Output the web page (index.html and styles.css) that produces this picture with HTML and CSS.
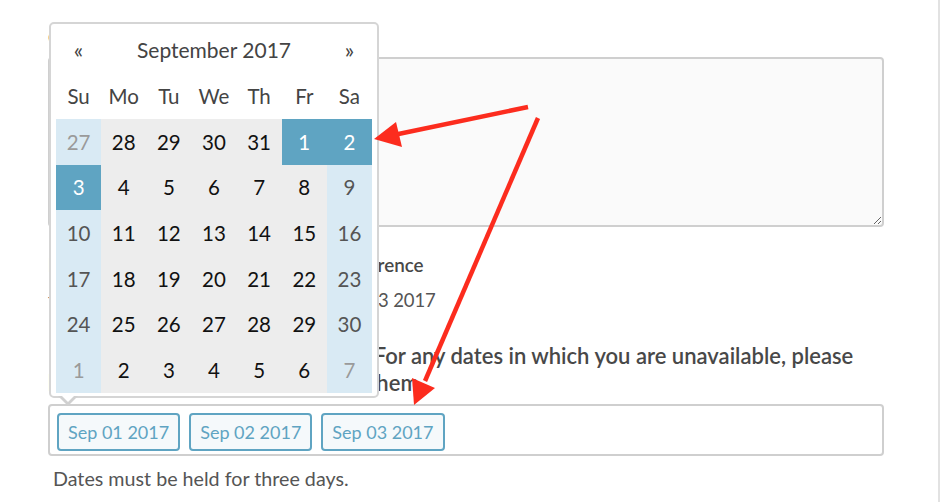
FILE: index.html
```html
<!DOCTYPE html>
<html lang="en">
<head>
<meta charset="utf-8">
<title>Date selection</title>
<link rel="stylesheet" href="styles.css">
</head>
<body>
<div class="page">
  <div class="form">
    <h2 class="title">Tell us a little bit about your group and your stay</h2>
    <label class="lbl lbl-first" for="comments">Comments</label>
    <textarea id="comments" class="area"></textarea>
    <label class="lbl lbl-pref">Preferred Meeting Dates for Your Conference</label>
    <div class="value">from September 01 2017 to September 03 2017</div>
    <p class="lbl note">Pick the three consecutive dates. For any dates in which you are unavailable, please<br>let us know so that we can avoid them</p>
    <div class="tags">
      <span class="tag">Sep 01 2017</span>
      <span class="tag">Sep 02 2017</span>
      <span class="tag">Sep 03 2017</span>
    </div>
    <p class="help">Dates must be held for three days.</p>
  </div>

  <div class="dp">
    <div class="dp-grid">
      <div class="hd nav">&laquo;</div>
      <div class="hd month">September 2017</div>
      <div class="hd nav">&raquo;</div>

      <div class="dow">Su</div><div class="dow">Mo</div><div class="dow">Tu</div><div class="dow">We</div><div class="dow">Th</div><div class="dow">Fr</div><div class="dow">Sa</div>

      <div class="d we old">27</div><div class="d">28</div><div class="d">29</div><div class="d">30</div><div class="d">31</div><div class="d sel">1</div><div class="d sel">2</div>
      <div class="d sel">3</div><div class="d">4</div><div class="d">5</div><div class="d">6</div><div class="d">7</div><div class="d">8</div><div class="d we">9</div>
      <div class="d we">10</div><div class="d">11</div><div class="d">12</div><div class="d">13</div><div class="d">14</div><div class="d">15</div><div class="d we">16</div>
      <div class="d we">17</div><div class="d">18</div><div class="d">19</div><div class="d">20</div><div class="d">21</div><div class="d">22</div><div class="d we">23</div>
      <div class="d we">24</div><div class="d">25</div><div class="d">26</div><div class="d">27</div><div class="d">28</div><div class="d">29</div><div class="d we">30</div>
      <div class="d we old">1</div><div class="d">2</div><div class="d">3</div><div class="d">4</div><div class="d">5</div><div class="d">6</div><div class="d we old">7</div>
    </div>
  </div>

  <svg class="ann" width="942" height="502" viewBox="0 0 942 502" aria-hidden="true">
    <line x1="528" y1="107" x2="396" y2="134.5" stroke="#fc2c1e" stroke-width="4.5"/>
    <polygon points="374,139 396,122 402,147" fill="#fc2c1e"/>
    <line x1="538" y1="118" x2="425" y2="381" stroke="#fc2c1e" stroke-width="4.5"/>
    <polygon points="414,405 412,378 435,388" fill="#fc2c1e"/>
  </svg>
</div>
</body>
</html>
```
FILE: styles.css
```css
* { box-sizing: border-box; }
html, body { margin: 0; padding: 0; background: #fff; }
body { font-family: Lato, "Open Sans", sans-serif; color: #444; }

.page {
  position: relative;
  width: 940px;
  height: 502px;
  border-right: 2px solid #e2e2e2;
  overflow: hidden;
}

.form {
  display: flex;
  flex-direction: column;
  width: 836px;
  margin-left: 48px;
}

.title {
  margin: -24px 0 0;
  height: 24px;
  font-size: 22px;
  line-height: 24px;
  font-weight: 400;
  color: #7ab2d8;
  text-align: center;
  white-space: nowrap;
}

.lbl {
  display: block;
  margin: 0;
  font-size: 18px;
  line-height: 24px;
  font-weight: 600;
  color: #484848;
}
.lbl-first { margin-top: 25px; margin-bottom: 8px; }

.area {
  display: block;
  width: 836px;
  height: 170px;
  margin: 0;
  border: 2px solid #cfcfcf;
  border-radius: 4px;
  background: #fafafa;
  resize: vertical;
  font: inherit;
}

.lbl-pref { margin-top: 26px; font-size: 18.8px; white-space: nowrap; }

.value {
  margin-top: 9px;
  font-size: 18.5px;
  line-height: 28px;
  letter-spacing: -0.14px;
  color: #555;
  white-space: nowrap;
}

.note {
  margin-top: 28px;
  font-size: 22px;
  line-height: 27px;
  white-space: nowrap;
}

.tags {
  display: flex;
  align-items: flex-start;
  gap: 9px;
  height: 52px;
  margin-top: 8px;
  padding: 7px 7px 3px;
  border: 2px solid #cfcfcf;
  border-radius: 4px;
}
.tag {
  height: 38px;
  padding: 0 9px;
  border: 2px solid #5fa4c2;
  border-radius: 4px;
  background: #f5f9fb;
  color: #5fa4c2;
  font-size: 18px;
  line-height: 34px;
  white-space: nowrap;
}

.help {
  margin: 11px 0 0 5px;
  font-size: 19.7px;
  line-height: 24px;
  color: #555;
}

/* datepicker popup */
.dp {
  position: absolute;
  left: 49px;
  top: 22px;
  width: 330px;
  padding: 2px 5px 3px;
  border: 2px solid #d5d5d5;
  border-radius: 5px;
  background: #fff;
}
.dp::before {
  content: "";
  position: absolute;
  left: 7px;
  top: 100%;
  border-left: 10px solid transparent;
  border-right: 10px solid transparent;
  border-top: 10px solid #d0d0d0;
}
.dp::after {
  content: "";
  position: absolute;
  left: 9px;
  top: calc(100% - 2px);
  border-left: 8px solid transparent;
  border-right: 8px solid transparent;
  border-top: 8px solid #fff;
}

.dp-grid {
  display: grid;
  width: 316px;
  grid-template-columns: repeat(7, 1fr);
  grid-template-rows: 46px 47px repeat(6, 45.67px);
}
.hd, .dow, .d {
  display: flex;
  align-items: center;
  justify-content: center;
}
.hd { font-size: 21px; color: #444; }
.month { grid-column: span 5; }
.nav { font-size: 22px; }
.dow { font-size: 20.5px; color: #444; }

.d { font-size: 20.5px; background: #ededed; color: #111; }
.d.we { background: #d9eaf4; color: #555; }
.d.old { color: #9a9a9a; }
.d.sel { background: #5fa4c2; color: #fff; }

.ann {
  position: absolute;
  left: 0;
  top: 0;
  pointer-events: none;
}
```
